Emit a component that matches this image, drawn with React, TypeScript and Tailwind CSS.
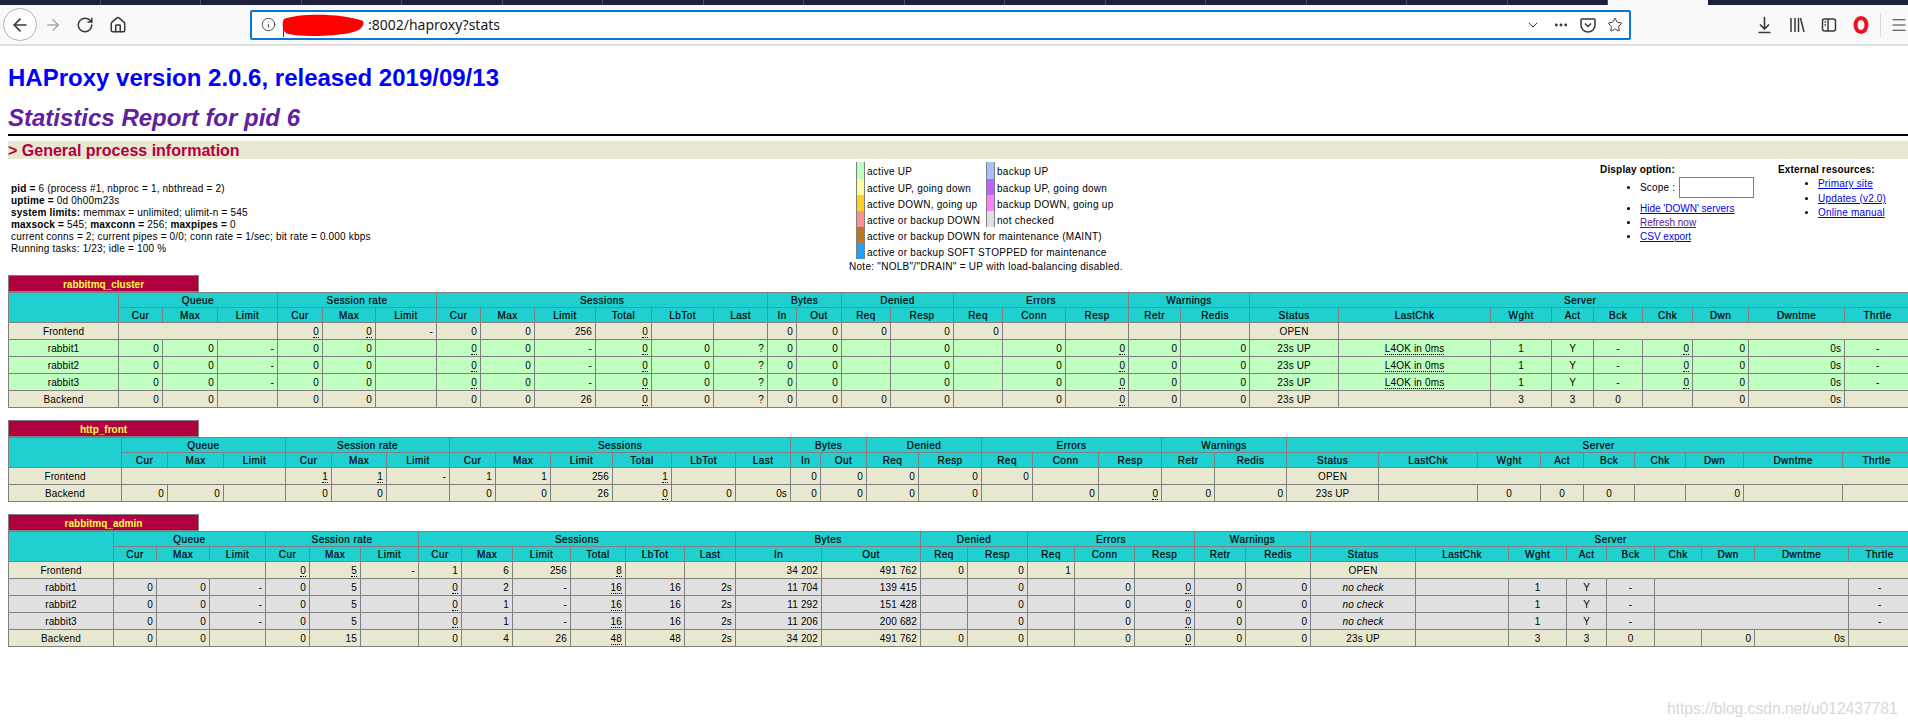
import { ArrowLeft, ArrowRight, RotateCw, Home, Info, ChevronDown, Ellipsis, Star, Menu } from "lucide-react";

const groups: [string, number][] = [["Queue", 3], ["Session rate", 3], ["Sessions", 6], ["Bytes", 2], ["Denied", 2], ["Errors", 3], ["Warnings", 2], ["Server", 9]];
const subs = ["Cur", "Max", "Limit", "Cur", "Max", "Limit", "Cur", "Max", "Limit", "Total", "LbTot", "Last", "In", "Out", "Req", "Resp", "Req", "Conn", "Resp", "Retr", "Redis", "Status", "LastChk", "Wght", "Act", "Bck", "Chk", "Dwn", "Dwntme", "Thrtle"];
const centered = new Set([0, 22, 23, 24, 25, 26, 30]);

type Row = { bg: string; text: string };
const frontBg = "bg-[#e8e8d0]";
const upBg = "bg-[#c0ffc0]";
const grayBg = "bg-[#e0e0e0]";

const tables: { name: string; edges: number[]; rows: Row[] }[] = [
  {
    name: "rabbitmq_cluster",
    edges: [8, 118, 162, 217, 277, 322, 375, 436, 480, 534, 595, 651, 713, 767, 796, 841, 890, 953, 1002, 1065, 1128, 1180, 1249, 1338, 1490, 1551, 1593, 1642, 1692, 1748, 1844, 1910],
    rows: [
      { bg: frontBg, text: "Frontend|^3|_0|_0|-|0|0|256|_0|||0|0|0|0|0|||||OPEN|^8" },
      { bg: upBg, text: "rabbit1|0|0|-|0|0||_0|0|-|_0|0|?|0|0||0||0|_0|0|0|23s UP|_L4OK in 0ms|1|Y|-|_0|0|0s|-" },
      { bg: upBg, text: "rabbit2|0|0|-|0|0||_0|0|-|_0|0|?|0|0||0||0|_0|0|0|23s UP|_L4OK in 0ms|1|Y|-|_0|0|0s|-" },
      { bg: upBg, text: "rabbit3|0|0|-|0|0||_0|0|-|_0|0|?|0|0||0||0|_0|0|0|23s UP|_L4OK in 0ms|1|Y|-|_0|0|0s|-" },
      { bg: frontBg, text: "Backend|0|0||0|0||0|0|26|_0|0|?|0|0|0|0||0|_0|0|0|23s UP||3|3|0||0|0s|" },
    ],
  },
  {
    name: "http_front",
    edges: [8, 121, 167, 223, 285, 331, 386, 449, 495, 550, 612, 671, 735, 790, 820, 866, 918, 981, 1032, 1098, 1161, 1214, 1286, 1378, 1477, 1540, 1583, 1634, 1685, 1743, 1842, 1910],
    rows: [
      { bg: frontBg, text: "Frontend|^3|_1|_1|-|1|1|256|_1|||0|0|0|0|0|||||OPEN|^8" },
      { bg: frontBg, text: "Backend|0|0||0|0||0|0|26|_0|0|0s|0|0|0|0||0|_0|0|0|23s UP||0|0|0||0||" },
    ],
  },
  {
    name: "rabbitmq_admin",
    edges: [8, 113, 156, 209, 265, 309, 360, 418, 461, 512, 570, 625, 684, 735, 821, 920, 967, 1027, 1074, 1134, 1194, 1245, 1310, 1415, 1508, 1566, 1606, 1654, 1701, 1754, 1848, 1910],
    rows: [
      { bg: frontBg, text: "Frontend|^3|_0|_5|-|1|6|256|_8|||34 202|491 762|0|0|1|||||OPEN|^8" },
      { bg: grayBg, text: "rabbit1|0|0|-|0|5||_0|2|-|_16|16|2s|11 704|139 415||0||0|_0|0|0|~no check||1|Y|-|^3|-" },
      { bg: grayBg, text: "rabbit2|0|0|-|0|5||_0|1|-|_16|16|2s|11 292|151 428||0||0|_0|0|0|~no check||1|Y|-|^3|-" },
      { bg: grayBg, text: "rabbit3|0|0|-|0|5||_0|1|-|_16|16|2s|11 206|200 682||0||0|_0|0|0|~no check||1|Y|-|^3|-" },
      { bg: frontBg, text: "Backend|0|0||0|15||0|4|26|_48|48|2s|34 202|491 762|0|0||0|_0|0|0|23s UP||3|3|0||0|0s|" },
    ],
  },
];

function StatRow({ row }: { row: Row }) {
  let col = 0;
  return (
    <tr className={`h-[17px] ${row.bg}`}>
      {row.text.split("|").map((raw, i) => {
        const idx = col;
        if (raw.startsWith("^")) {
          const span = Number(raw.slice(1));
          col += span;
          return <td key={i} colSpan={span} className="border border-[#808080]" />;
        }
        col += 1;
        const under = raw.startsWith("_");
        const italic = raw.startsWith("~");
        const value = under || italic ? raw.slice(1) : raw;
        return (
          <td key={i} className={`border border-[#808080] px-[3px] pt-px pb-0 leading-[12px] tracking-[0.15px] whitespace-nowrap overflow-hidden ${centered.has(idx) ? "text-center" : "text-right"}`}>
            {under ? <span className="border-b border-dotted border-black">{value}</span> : italic ? <span className="italic">{value}</span> : value}
          </td>
        );
      })}
    </tr>
  );
}

const thClass = "border border-[#808080] p-0 pt-px leading-[12px] font-normal tracking-[0.45px] [-webkit-text-stroke:0.2px_black]";

function StatTable({ name, edges, rows }: { name: string; edges: number[]; rows: Row[] }) {
  const width = edges[edges.length - 1] - edges[0];
  return (
    <section className="mb-[12px]">
      <div className="ml-[8px] flex h-[17px] w-[191px] items-center justify-center border border-[#808080] bg-[#b00040] pt-px text-[10px] font-bold text-[#ffff40]">
        {name}
      </div>
      <table className="ml-[8px] table-fixed border-collapse text-[10px] text-black" style={{ width }}>
        <colgroup>
          {edges.slice(1).map((e, i) => (
            <col key={i} style={{ width: e - edges[i] }} />
          ))}
        </colgroup>
        <thead>
          <tr className="h-[15px] bg-[#20d0d0]">
            <th rowSpan={2} className="border border-[#808080]" />
            {groups.map(([g, n]) => (
              <th key={g} colSpan={n} className={thClass}>{g}</th>
            ))}
          </tr>
          <tr className="h-[15px] bg-[#20d0d0]">
            {subs.map((s, i) => (
              <th key={i} className={thClass}>{s}</th>
            ))}
          </tr>
        </thead>
        <tbody>
          {rows.map((r, i) => (
            <StatRow key={i} row={r} />
          ))}
        </tbody>
      </table>
    </section>
  );
}

const legend: [string, string, string?, string?][] = [
  ["bg-[#c0ffc0]", "active UP", "bg-[#a0c0ff]", "backup UP"],
  ["bg-[#ffffa0]", "active UP, going down", "bg-[#c060ff]", "backup UP, going down"],
  ["bg-[#ffd020]", "active DOWN, going up", "bg-[#ff80ff]", "backup DOWN, going up"],
  ["bg-[#ff9090]", "active or backup DOWN", "bg-[#e0e0e0]", "not checked"],
  ["bg-[#c07820]", "active or backup DOWN for maintenance (MAINT)"],
  ["bg-[#20a0ff]", "active or backup SOFT STOPPED for maintenance"],
];

function Toolbar() {
  return (
    <header>
      <div className="flex h-[5px] bg-[#1d1f3b]">
        {Array.from({ length: 16 }).map((_, i) => (
          <div key={i} className="w-[100.5px] border-r border-[#4d4f66]" />
        ))}
        <div className="w-[100px] bg-[#f9f9fa]" />
      </div>
      <div className="flex h-[41px] items-center border-b-2 border-[#e0e0e1] bg-[#f9f9fa] text-[#38383d]">
        <button className="ml-[3px] flex h-[33px] w-[34px] items-center justify-center rounded-full border border-[#b1b1b3] bg-white">
          <ArrowLeft size={20} strokeWidth={2} />
        </button>
        <ArrowRight size={18} strokeWidth={2} className="ml-[7px] text-[#a8a8aa]" />
        <RotateCw size={18} strokeWidth={2} className="ml-[14px]" />
        <Home size={18} strokeWidth={2} className="ml-[15px]" />
        <div className="relative ml-[123px] flex h-[30px] w-[1382px] items-center rounded-[2px] border-2 border-[#0a78d0] bg-white pl-[9px] pr-[6px]">
          <Info size={15} strokeWidth={1.4} />
          <span className="ml-[92px] font-['Noto_Sans',sans-serif] text-[14px] text-[#1a1a1a]">:8002/haproxy?stats</span>
          <div className="absolute left-[31px] top-[12px] h-[13px] w-px bg-[#38383d]" />
          <svg className="absolute left-[30px] top-[1px]" width="83" height="24" viewBox="0 0 86 24" preserveAspectRatio="none">
            <path d="M2 6 C 18 0, 62 0, 84 8 C 86 12, 82 18, 70 20 C 50 24, 12 24, 4 20 C 0 16, 0 10, 2 6 Z" fill="#ff0000" />
          </svg>
          <ChevronDown size={16} strokeWidth={1.5} className="ml-auto mr-[12px]" />
          <Ellipsis size={16} strokeWidth={2.4} className="mr-[11px]" />
          <svg className="mr-[11px]" width="16" height="16" viewBox="0 0 16 16" fill="none" stroke="#38383d" strokeWidth="1.5">
            <path d="M2 2h12a1 1 0 0 1 1 1v5a7 7 0 0 1-14 0V3a1 1 0 0 1 1-1Z" />
            <path d="M5 6.5 8 9.5 11 6.5" />
          </svg>
          <Star size={16} strokeWidth={1.5} />
        </div>
        <svg className="ml-[125px]" width="17" height="18" viewBox="0 0 17 18" fill="none" stroke="#38383d" strokeWidth="1.6">
          <path d="M8.5 1v12M4 8.5 8.5 13 13 8.5M2.5 16.5h12" />
        </svg>
        <svg className="ml-[16px]" width="16" height="16" viewBox="0 0 16 16" fill="none" stroke="#38383d" strokeWidth="1.5">
          <path d="M2 1v14M6 1v14M9.5 1v14M11.5 1l3.5 14" />
        </svg>
        <svg className="ml-[16px]" width="16" height="16" viewBox="0 0 16 16" fill="none" stroke="#38383d" strokeWidth="1.5">
          <rect x="1.5" y="2" width="13" height="12" rx="2" />
          <path d="M7 2v12M3.5 5H5M3.5 8H5" />
        </svg>
        <svg className="ml-[16px]" width="16" height="18" viewBox="0 0 16 18" fill="none">
          <ellipse cx="8" cy="9" rx="5.5" ry="7" stroke="#f01020" strokeWidth="4" />
        </svg>
        <div className="ml-[11px] h-[24px] w-px bg-[#d8d8d8]" />
        <Menu size={18} strokeWidth={1.6} className="ml-[9px]" />
      </div>
    </header>
  );
}

function Link({ children, visited }: { children: string; visited?: boolean }) {
  return <a className={`underline ${visited ? "text-[#551a8b]" : "text-[#0000ee]"}`}>{children}</a>;
}

function GeneralInfo() {
  return (
    <div className="flex h-[115px] text-[10px] leading-[12px] tracking-[0.18px] text-black">
      <div className="w-[856px] pl-[11px] pt-[24px]">
        <p><b>pid = </b>6 (process #1, nbproc = 1, nbthread = 2)</p>
        <p><b>uptime = </b>0d 0h00m23s</p>
        <p><b>system limits:</b> memmax = unlimited; ulimit-n = 545</p>
        <p><b>maxsock = </b>545; <b>maxconn = </b>256; <b>maxpipes = </b>0</p>
        <p>current conns = 2; current pipes = 0/0; conn rate = 1/sec; bit rate = 0.000 kbps</p>
        <p>Running tasks: 1/23; idle = 100 %</p>
      </div>
      <div className="w-[744px] pt-[3px] tracking-[0.28px]">
        {legend.map(([c1, t1, c2, t2], i) => (
          <div key={t1} className={`flex items-stretch ${i === 0 ? "h-[17px]" : "h-[16px]"}`}>
            <div className={`w-[9px] border-x border-[#808080] ${c1}`} />
            <div className={`${c2 ? "w-[121px]" : ""} pl-[2px] leading-[20px] whitespace-nowrap`}>{t1}</div>
            {c2 && <div className={`w-[9px] border-x border-[#808080] ${c2}`} />}
            {t2 && <div className="pl-[2px] leading-[20px] whitespace-nowrap">{t2}</div>}
          </div>
        ))}
        <p className="-ml-[7px] mt-[2px] whitespace-nowrap">Note: "NOLB"/"DRAIN" = UP with load-balancing disabled.</p>
      </div>
      <div className="w-[178px] pt-[5px]">
        <b>Display option:</b>
        <ul className="mt-px ml-[40px] list-disc leading-[14px] tracking-normal">
          <li className="h-[25px]"><span className="flex items-center gap-[4px] tracking-[0.18px]">Scope :<input readOnly className="h-[21px] w-[75px] border border-[#808080] bg-white" /></span></li>
          <li><Link>Hide 'DOWN' servers</Link></li>
          <li><Link visited>Refresh now</Link></li>
          <li><Link>CSV export</Link></li>
        </ul>
      </div>
      <div className="pt-[5px]">
        <b>External resources:</b>
        <ul className="ml-[40px] mt-px list-disc leading-[14.5px]">
          <li><Link>Primary site</Link></li>
          <li><Link>Updates (v2.0)</Link></li>
          <li><Link>Online manual</Link></li>
        </ul>
      </div>
    </div>
  );
}

export default function App() {
  return (
    <div className="relative h-[728px] w-[1908px] overflow-hidden bg-white font-['Liberation_Sans',Arial,sans-serif]">
      <Toolbar />
      <h1 className="ml-[8px] mt-[17px] h-[30px] text-[24px] font-bold leading-[30px] text-[#0000ff]">HAProxy version 2.0.6, released 2019/09/13</h1>
      <h2 className="ml-[8px] mt-[10px] h-[31px] text-[24px] font-bold italic leading-[30px] text-[#6020a0]">Statistics Report for pid 6</h2>
      <hr className="ml-[8px] border-0 border-t-2 border-black" />
      <div className="ml-[8px] mt-[5px] h-[18px] bg-[#e8e8d0] text-[16px] font-bold leading-[20px] text-[#b00040]">&gt; General process information</div>
      <GeneralInfo />
      <div className="pt-[1px]">
        {tables.map((t) => (
          <StatTable key={t.name} {...t} />
        ))}
      </div>
      <div className="absolute left-[1667px] top-[700px] whitespace-nowrap text-[15.6px] leading-[18px] text-[#d8d8d8]">https://blog.csdn.net/u012437781</div>
    </div>
  );
}
